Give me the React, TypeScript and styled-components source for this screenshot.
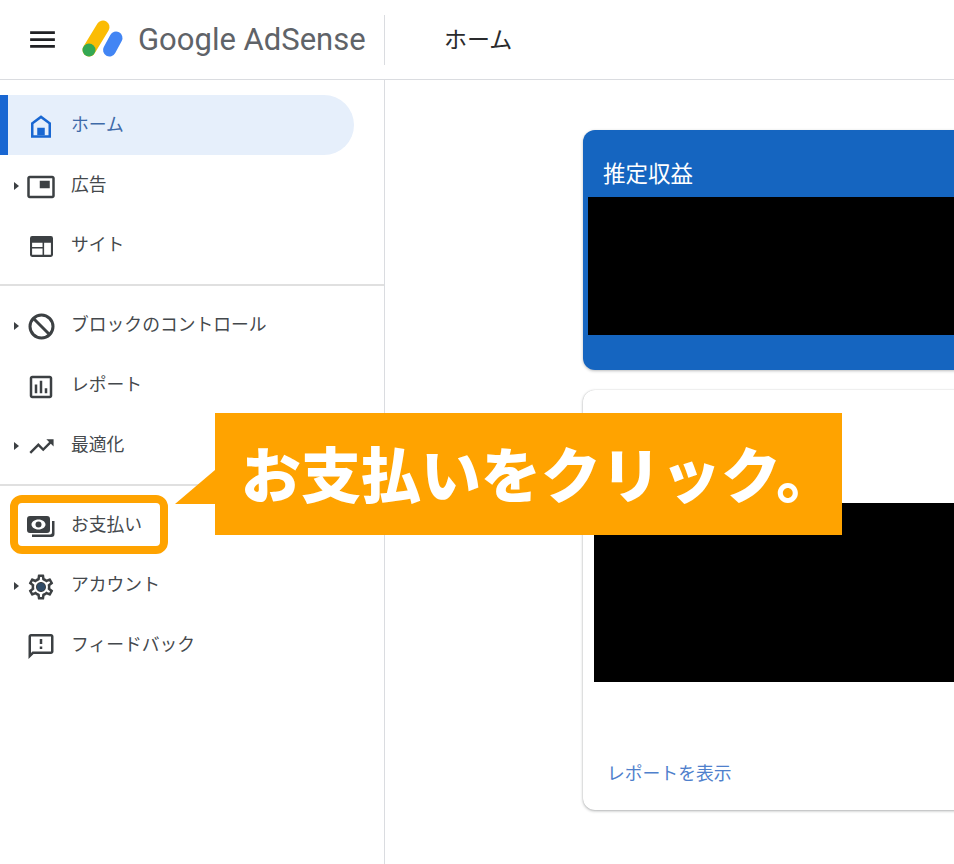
import React from 'react';
import styled, { createGlobalStyle } from 'styled-components';
import {
  MdMenu,
  MdPictureInPicture,
  MdOutlineAssessment,
  MdTrendingUp,
  MdOutlineSettings,
  MdOutlineFeedback,
} from 'react-icons/md';

const GlobalStyle = createGlobalStyle`
  html, body {
    margin: 0;
    padding: 0;
    background: #fff;
    font-family: "Noto Sans CJK JP", "Liberation Sans", sans-serif;
  }
`;

const Page = styled.div`
  position: relative;
  width: 954px;
  height: 864px;
  overflow: hidden;
  background: #fff;
`;

const Header = styled.header`
  display: flex;
  align-items: center;
  height: 79px;
  border-bottom: 1px solid #dadce0;
  box-sizing: content-box;
`;

const Brand = styled.div`
  display: flex;
  align-items: center;
  flex: none;
  width: 384px;
  height: 50px;
  padding-left: 26px;
  box-sizing: border-box;
  color: #202124;
`;

const LogoMark = styled.svg`
  flex: none;
  width: 40px;
  height: 40px;
  margin-left: 23px;
  overflow: visible;
`;

const Wordmark = styled.span`
  margin-left: 16px;
  font-family: Roboto, "Liberation Sans", sans-serif;
  font-size: 31px;
  color: #5f6368;
  white-space: nowrap;
`;

const PageTitle = styled.h1`
  margin: 0;
  height: 50px;
  padding-left: 59px;
  border-left: 1px solid #dadce0;
  font-size: 23px;
  font-weight: 400;
  line-height: 46px;
  color: #2a2b2d;
`;

const Body = styled.div`
  display: flex;
  height: 784px;
`;

const Sidebar = styled.nav`
  flex: none;
  width: 385px;
  padding-top: 15px;
  box-sizing: border-box;
  border-right: 1px solid #dadce0;
`;

const NavGroup = styled.div<{ $last?: boolean }>`
  padding-bottom: 9px;
  margin-bottom: 9px;
  border-bottom: ${(props) => (props.$last ? 'none' : '2px solid #e0e0e0')};
`;

const NavRow = styled.div<{ $active?: boolean }>`
  position: relative;
  display: flex;
  align-items: center;
  height: 60px;
  width: 354px;
  padding-left: ${(props) => (props.$active ? '6px' : '14px')};
  box-sizing: border-box;
  border-left: ${(props) => (props.$active ? '8px solid #1967d2' : 'none')};
  border-radius: ${(props) => (props.$active ? '0 30px 30px 0' : '0')};
  background: ${(props) => (props.$active ? '#e6effb' : 'transparent')};
  color: ${(props) => (props.$active ? '#3f6aa8' : '#44484c')};
`;

const CaretSlot = styled.span`
  display: flex;
  align-items: center;
  flex: none;
  width: 12px;
  margin-top: 1px;
`;

const Caret = styled.span`
  width: 0;
  height: 0;
  border-top: 4px solid transparent;
  border-bottom: 4px solid transparent;
  border-left: 5px solid #3c4043;
`;

const IconSlot = styled.span<{ $blue?: boolean }>`
  position: relative;
  display: flex;
  align-items: center;
  justify-content: center;
  flex: none;
  width: 30px;
  height: 30px;
  margin-top: 3px;
  color: ${(props) => (props.$blue ? '#1967d2' : '#3c4043')};
`;

const GearDot = styled.span`
  position: absolute;
  left: 11px;
  top: 11px;
  width: 8px;
  height: 8px;
  border-radius: 50%;
  background: #2f4a66;
`;

const NavLabel = styled.span`
  margin-left: 15px;
  margin-top: -5px;
  font-size: 17.8px;
  line-height: 26px;
  white-space: nowrap;
`;

const PaymentHighlight = styled.span`
  position: absolute;
  left: 10px;
  top: 0;
  width: 158px;
  height: 59px;
  box-sizing: border-box;
  border: 8px solid #ffa300;
  border-radius: 12px;
`;

const Main = styled.main`
  flex: 1;
  min-width: 0;
  overflow: hidden;
  display: flex;
  flex-direction: column;
  gap: 20px;
  padding: 50px 0 0 198px;
`;

const EarningsCard = styled.section`
  flex: none;
  width: 560px;
  height: 240px;
  padding: 27px 0 0 5px;
  box-sizing: border-box;
  border-radius: 12px;
  background: #1565c0;
  box-shadow: 0 1px 3px rgba(60, 64, 67, 0.35);
`;

const EarningsTitle = styled.h2`
  margin: 0 0 0 15px;
  height: 40px;
  font-size: 22.5px;
  font-weight: 400;
  line-height: 30px;
  color: #fff;
`;

const Redacted = styled.div<{ $height: number }>`
  height: ${(props) => props.$height}px;
  background: #000;
`;

const ReportCard = styled.section`
  flex: none;
  display: flex;
  flex-direction: column;
  width: 560px;
  height: 420px;
  padding: 113px 0 0 11px;
  box-sizing: border-box;
  border-radius: 12px;
  background: #fff;
  box-shadow: 0 1px 3px rgba(60, 64, 67, 0.4), 0 0 1px rgba(60, 64, 67, 0.25);
`;

const ReportLink = styled.a`
  margin: 77px 0 0 13px;
  font-size: 17.8px;
  line-height: 26px;
  color: #4f80cc;
`;

const Callout = styled.div`
  position: absolute;
  left: 215px;
  top: 413px;
  width: 627px;
  height: 122px;
  box-sizing: border-box;
  padding-left: 26px;
  background: #ffa300;
  color: #fff;
  font-size: 60px;
  font-weight: 900;
  line-height: 118px;
  white-space: nowrap;
`;

const CalloutTail = styled.span`
  position: absolute;
  left: -40px;
  top: 57px;
  width: 0;
  height: 0;
  border-left: 40px solid transparent;
  border-bottom: 34px solid #ffa300;
`;

const HomeIcon = () => (
  <svg width="31" height="31" viewBox="0 0 24 24" fill="currentColor">
    <path d="M12 3L4 9v12h16V9l-8-6zm6 16H6v-9l6-4.5 6 4.5v9z" />
    <rect x="9" y="13" width="6" height="6" />
  </svg>
);

const SiteIcon = () => (
  <svg width="23" height="21" viewBox="0 0 22 20" fill="currentColor">
    <path
      fillRule="evenodd"
      d="M2 0h18a2 2 0 0 1 2 2v16a2 2 0 0 1-2 2H2a2 2 0 0 1-2-2V2a2 2 0 0 1 2-2zm0 6.5v4h10v-4H2zm0 5.5v6h10v-6H2zm11.5-5.5V18H20V6.5h-6.5z"
    />
  </svg>
);

const BlockIcon = () => (
  <svg width="27" height="27" viewBox="0 0 27 27" fill="none" stroke="currentColor" strokeWidth="3">
    <circle cx="13.5" cy="13.5" r="11.5" />
    <line x1="5.5" y1="5.5" x2="21.5" y2="21.5" />
  </svg>
);

const PaymentIcon = () => (
  <svg width="28" height="23" viewBox="0 0 28 23" fill="currentColor">
    <path
      fillRule="evenodd"
      d="M3 1h17a3 3 0 0 1 3 3v11a3 3 0 0 1-3 3H3a3 3 0 0 1-3-3V4a3 3 0 0 1 3-3zm8.5 3.5C7.5 4.5 4.5 7 4.5 9.5s3 5 7 5 7-2.500 7-5-3-5-7-5z"
    />
    <circle cx="11.500" cy="9.500" r="3" />
    <path d="M25 6h2.500v13a3 3 0 0 1-3 3H5v-2.500h18a2 2 0 0 0 2-2V6z" />
  </svg>
);

type NavItem = {
  label: string;
  icon: React.ReactNode;
  caret?: boolean;
  active?: boolean;
  highlight?: boolean;
};

const navGroups: NavItem[][] = [
  [
    { label: 'ホーム', icon: <HomeIcon />, active: true },
    { label: '広告', icon: <MdPictureInPicture size={30} />, caret: true },
    { label: 'サイト', icon: <SiteIcon /> },
  ],
  [
    { label: 'ブロックのコントロール', icon: <BlockIcon />, caret: true },
    { label: 'レポート', icon: <MdOutlineAssessment size={30} /> },
    { label: '最適化', icon: <MdTrendingUp size={29} />, caret: true },
  ],
  [
    { label: 'お支払い', icon: <PaymentIcon />, highlight: true },
    {
      label: 'アカウント',
      icon: (
        <>
          <MdOutlineSettings size={32} />
          <GearDot />
        </>
      ),
      caret: true,
    },
    { label: 'フィードバック', icon: <MdOutlineFeedback size={31} /> },
  ],
];

export default function App() {
  return (
    <Page>
      <GlobalStyle />
      <Header>
        <Brand>
          <MdMenu size={33} />
          <LogoMark viewBox="0 0 40 40">
            <line x1="21" y1="7" x2="7" y2="30" stroke="#fbbc04" strokeWidth="13" strokeLinecap="round" />
            <line x1="34" y1="18" x2="27.5" y2="30" stroke="#4285f4" strokeWidth="13" strokeLinecap="round" />
            <circle cx="7" cy="30" r="6.5" fill="#34a853" />
          </LogoMark>
          <Wordmark>Google AdSense</Wordmark>
        </Brand>
        <PageTitle>ホーム</PageTitle>
      </Header>
      <Body>
        <Sidebar>
          {navGroups.map((group, i) => (
            <NavGroup key={i} $last={i === navGroups.length - 1}>
              {group.map((item) => (
                <NavRow key={item.label} $active={item.active}>
                  <CaretSlot>{item.caret && <Caret />}</CaretSlot>
                  <IconSlot $blue={item.active}>{item.icon}</IconSlot>
                  <NavLabel>{item.label}</NavLabel>
                  {item.highlight && <PaymentHighlight />}
                </NavRow>
              ))}
            </NavGroup>
          ))}
        </Sidebar>
        <Main>
          <EarningsCard>
            <EarningsTitle>推定収益</EarningsTitle>
            <Redacted $height={138} />
          </EarningsCard>
          <ReportCard>
            <Redacted $height={179} />
            <ReportLink>レポートを表示</ReportLink>
          </ReportCard>
        </Main>
      </Body>
      <Callout>
        <CalloutTail />
        お支払いをクリック。
      </Callout>
    </Page>
  );
}
